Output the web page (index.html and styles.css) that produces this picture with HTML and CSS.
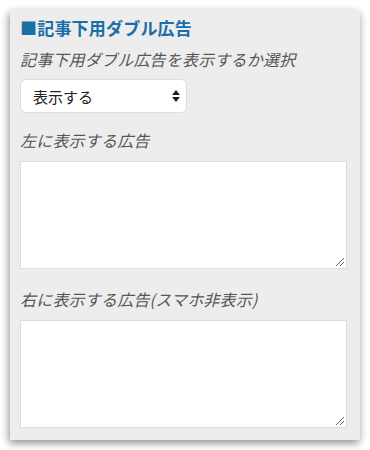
FILE: index.html
```html
<!DOCTYPE html>
<html lang="ja">

<head>
    <meta charset="UTF-8">
    <title>記事下用ダブル広告</title>
    <link rel="stylesheet" href="styles.css">
</head>

<body>
    <!-- Widget Panel -->
    <div class="panel">
        <h3 class="panel-title">■記事下用ダブル広告</h3>

        <label class="field-label" for="double-ad">記事下用ダブル広告を表示するか選択</label>
        <div class="select-box">
            <span>表示する</span>
            <svg class="select-arrows" width="8" height="12" viewBox="0 0 8 12">
                <path d="M4 0 L8 5 L0 5 Z" fill="#222"/>
                <path d="M0 7 L8 7 L4 12 Z" fill="#222"/>
            </svg>
        </div>

        <label class="field-label">左に表示する広告</label>
        <div class="ad-textarea">
            <span class="grip"></span>
        </div>

        <label class="field-label">右に表示する広告(スマホ非表示)</label>
        <div class="ad-textarea">
            <span class="grip"></span>
        </div>
    </div>
</body>

</html>
```

FILE: styles.css
```css
/* General Styles */
body {
    font-family: "Noto Sans CJK JP", "Noto Sans", sans-serif;
    background-color: #fff;
    margin: 0;
    padding: 10px;
}

/* Panel */
.panel {
    width: 350px;
    height: 430px;
    box-sizing: border-box;
    background-color: #ededed;
    padding: 6px 13px 0 10px;
    box-shadow: -1px 3px 8px rgba(0, 0, 0, 0.45);
}

.panel-title {
    margin: 0;
    font-size: 17px;
    font-weight: bold;
    color: #1b6ea6;
    line-height: 24px;
    letter-spacing: 0.2px;
}

.field-label {
    display: block;
    font-size: 16px;
    font-style: italic;
    color: #555;
    line-height: 24px;
    margin-top: 7px;
    letter-spacing: 0.2px;
}

/* Select */
.select-box {
    display: flex;
    align-items: center;
    justify-content: space-between;
    width: 167px;
    height: 34px;
    box-sizing: border-box;
    margin-top: 8px;
    padding: 0 6px 0 12px;
    background-color: #fff;
    border: 1px solid #ddd;
    border-radius: 6px;
    font-size: 15px;
    color: #222;
}

.select-box + .field-label {
    margin-top: 15px;
}

/* Textareas */
.ad-textarea {
    position: relative;
    height: 108px;
    margin-top: 9px;
    background-color: #fff;
    border: 1px solid #dcdcdc;
    box-sizing: border-box;
}

.ad-textarea + .field-label {
    margin-top: 18px;
}

.grip {
    position: absolute;
    right: 2px;
    bottom: 2px;
    width: 8px;
    height: 8px;
    background:
        linear-gradient(135deg, transparent 45%, #666 45%, #666 55%, transparent 55%) no-repeat,
        linear-gradient(135deg, transparent 45%, #666 45%, #666 55%, transparent 55%) no-repeat;
    background-size: 8px 8px, 4px 4px;
    background-position: 0 0, 4px 4px;
}
```
